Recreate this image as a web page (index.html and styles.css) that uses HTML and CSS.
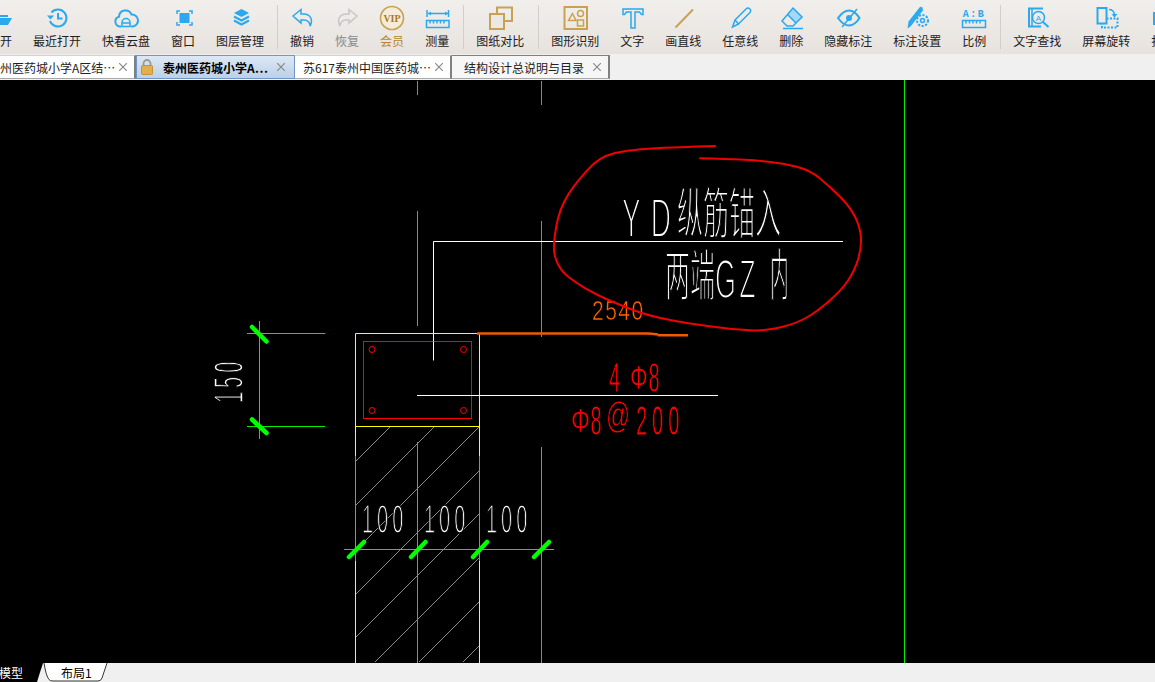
FILE: index.html
```html
<!DOCTYPE html>
<html>
<head>
  <meta charset="utf-8">
  <link rel="stylesheet" href="styles.css">
</head>
<body>
  <div class="toolbar">
    <div class="tool-group tool-group-first">
      <div class="tool">
        <svg class="tool-icon" viewBox="0 0 24 24"><path class="ic-fill" d="M1 7h8l2 2h9v2H1z"/><path class="ic-fill" d="M3 12h21l-4 7H1z"/></svg>
        <span>打开</span>
      </div>
      <div class="tool">
        <svg class="tool-icon" viewBox="0 0 24 24"><path class="ic-line" d="M6.5 6.5A8.5 8.5 0 1 1 5 15"/><path class="ic-fill" d="M2 9.500h7L5.500 13.500z"/><path class="ic-line" d="M13 7v5.500h4.500"/></svg>
        <span>最近打开</span>
      </div>
      <div class="tool">
        <svg class="tool-icon" viewBox="0 0 24 24"><path class="ic-line" d="M7 20.500H6a5 5 0 0 1-1-9.800 6.500 6.500 0 0 1 12.500-2.200 5.800 5.800 0 0 1 1 12H17"/><path class="ic-line ic-thin" d="M8 20.500v-4a4 4 0 0 1 8 0v4zM8 17h8"/></svg>
        <span>快看云盘</span>
      </div>
      <div class="tool">
        <svg class="tool-icon" viewBox="0 0 24 24"><rect class="ic-fill" x="8.500" y="7" width="10" height="10"/><path class="ic-line ic-thin" d="M6 8V5h3M18 5h3v3M21 16v3h-3M9 19H6v-3"/></svg>
        <span>窗口</span>
      </div>
      <div class="tool">
        <svg class="tool-icon" viewBox="0 0 24 24"><path class="ic-fill" d="M13.500 3l7.500 4-7.500 4-7.500-4z"/><path class="ic-line" d="M6 10.500l7.500 4 7.500-4M6 14.500l7.500 4 7.500-4"/></svg>
        <span>图层管理</span>
      </div>
    </div>
    <div class="tool-sep"></div>
    <div class="tool-group">
      <div class="tool">
        <svg class="tool-icon" viewBox="0 0 24 24"><path class="ic-line ic-thin" d="M3 10l8-6.500V8h3c4.500 0 7.500 3 7.500 7 0 2-.6 3.500-1.500 5 .2-3.500-2.500-6-6-6h-3v3z"/></svg>
        <span>撤销</span>
      </div>
      <div class="tool tool-off">
        <svg class="tool-icon" viewBox="0 0 24 24"><path class="ic-off" d="M22 10l-8-6.500V8h-3c-4.500 0-7.500 3-7.500 7 0 2 .6 3.500 1.500 5-.2-3.500 2.500-6 6-6h3v3z"/></svg>
        <span>恢复</span>
      </div>
      <div class="tool tool-vip">
        <svg class="tool-icon" viewBox="0 0 24 24"><circle class="ic-gold ic-vip-ring" cx="12" cy="12" r="11.500"/><text class="vip-text" x="12" y="15.500">VIP</text></svg>
        <span>会员</span>
      </div>
      <div class="tool">
        <svg class="tool-icon" viewBox="0 0 24 24"><path class="ic-line ic-thin" d="M2 4v7M23.500 4v7M3 7.500h20"/><path class="ic-fill" d="M3 7.500l3-2v4zM23 7.500l-3-2v4z"/><path class="ic-line ic-thin" d="M1.500 14.500h22.500v7H1.500zM5 14.500v3M8.500 14.500v3M12 14.500v3M15.500 14.500v3M19 14.500v3"/></svg>
        <span>测量</span>
      </div>
    </div>
    <div class="tool-sep"></div>
    <div class="tool-group">
      <div class="tool">
        <svg class="tool-icon" viewBox="0 0 24 24"><rect class="ic-gold" x="9" y="1.500" width="15" height="13.500"/><rect class="ic-gold ic-paper" x="2" y="8" width="14" height="15"/></svg>
        <span>图纸对比</span>
      </div>
    </div>
    <div class="tool-sep"></div>
    <div class="tool-group">
      <div class="tool">
        <svg class="tool-icon" viewBox="0 0 24 24"><rect class="ic-gold" x="1.500" y="1" width="22.500" height="22"/><path class="ic-gold ic-thin" d="M9.500 7.500l3.500 7H5.500z"/><circle class="ic-gold ic-thin" cx="17.500" cy="7.500" r="3"/><rect class="ic-gold ic-thin" x="14.500" y="14" width="6" height="6"/></svg>
        <span>图形识别</span>
      </div>
      <div class="tool">
        <svg class="tool-icon" viewBox="0 0 24 24"><path class="ic-line ic-thin" d="M3 3h20v5.500h-1.500L19.500 6H15v16h-4V6H6.500L4.500 8.500H3z"/></svg>
        <span>文字</span>
      </div>
      <div class="tool">
        <svg class="tool-icon" viewBox="0 0 24 24"><path class="ic-gold" d="M4.500 21.500L22 3.500"/></svg>
        <span>画直线</span>
      </div>
      <div class="tool">
        <svg class="tool-icon" viewBox="0 0 24 24"><path class="ic-line ic-thin" d="M7 14L18 3a2.500 2.500 0 0 1 4 3.500L10.500 18z"/><path class="ic-line ic-thin" d="M7 14l-2.500 7 6-3"/></svg>
        <span>任意线</span>
      </div>
      <div class="tool">
        <svg class="tool-icon" viewBox="0 0 24 24"><path class="ic-hatch" d="M14 2l9 9-6 6-9-9z"/><path class="ic-line ic-thin" d="M14 2l9 9-9 9H8l-5-5zM8 8l9 9M4 22.500h20"/></svg>
        <span>删除</span>
      </div>
      <div class="tool">
        <svg class="tool-icon" viewBox="0 0 24 24"><path class="ic-line" d="M2 12c4-5.500 7-7.500 11-7.500s7 2 10.500 7.500c-3.500 5.500-6.500 7.500-10.500 7.500S6 17.500 2 12z"/><circle class="ic-fill" cx="13" cy="12" r="3"/><path class="ic-line ic-thin" d="M21 3L6 21"/></svg>
        <span>隐藏标注</span>
      </div>
      <div class="tool">
        <svg class="tool-icon" viewBox="0 0 24 24"><path class="ic-fill" d="M2.500 22.500l1-7L14.500 1.500a2 2 0 0 1 3 .3l.5 2.500L6 20z"/><circle class="ic-line ic-thin" cx="17.500" cy="14.500" r="2"/><circle class="ic-line ic-gear" cx="17.500" cy="14.500" r="5.500"/></svg>
        <span>标注设置</span>
      </div>
      <div class="tool">
        <svg class="tool-icon" viewBox="0 0 24 24"><text class="ratio-text" x="12" y="10.500">A:B</text><path class="ic-line ic-thin" d="M.5 14.500h23v7H.5zM4 14.500v3M7.500 14.500v3M11 14.500v3M14.500 14.500v3M18 14.500v3"/></svg>
        <span>比例</span>
      </div>
    </div>
    <div class="tool-sep"></div>
    <div class="tool-group">
      <div class="tool">
        <svg class="tool-icon" viewBox="0 0 24 24"><path class="ic-line" d="M18 2.500H4v18h12"/><path class="ic-line ic-thin" d="M7 2.500v18"/><circle class="ic-line ic-thin" cx="13.500" cy="11.500" r="6"/><text class="lens-text" x="13.500" y="14.500">A</text><path class="ic-line" d="M17.500 15.500l6 5.500"/></svg>
        <span>文字查找</span>
      </div>
      <div class="tool">
        <svg class="tool-icon" viewBox="0 0 24 24"><rect class="ic-line" x="3.500" y="2" width="9" height="15.500"/><path class="ic-line ic-dash" d="M12.500 12.500H23.500V21.500H8V17.500"/><path class="ic-line ic-thin" d="M15 3.500c3 0 5 1.500 5.500 5"/><path class="ic-fill" d="M17.500 8h6L20.500 11.500z"/></svg>
        <span>屏幕旋转</span>
      </div>
      <div class="tool">
        <svg class="tool-icon" viewBox="0 0 24 24"><rect class="ic-fill" x="2" y="6" width="20" height="13"/></svg>
        <span>打印</span>
      </div>
    </div>
  </div>

  <div class="tabs">
    <div class="tab tab-first">
      <span>泰州医药城小学A区结…</span>
      <svg class="tab-close" viewBox="0 0 8 8"><path d="M0 0l8 8M8 0L0 8"/></svg>
    </div>
    <div class="tab tab-active">
      <svg class="tab-lock" viewBox="0 0 12 16"><path class="lock-shackle" d="M2.500 7V4.500a3.500 3.500 0 0 1 7 0V7"/><rect class="lock-body" x="0.500" y="6.500" width="11" height="9" rx="1"/></svg>
      <span>泰州医药城小学A…</span>
      <svg class="tab-close" viewBox="0 0 8 8"><path d="M0 0l8 8M8 0L0 8"/></svg>
    </div>
    <div class="tab tab-third">
      <span>苏617泰州中国医药城…</span>
      <svg class="tab-close" viewBox="0 0 8 8"><path d="M0 0l8 8M8 0L0 8"/></svg>
    </div>
    <div class="tab tab-last">
      <span>结构设计总说明与目录</span>
      <svg class="tab-close" viewBox="0 0 8 8"><path d="M0 0l8 8M8 0L0 8"/></svg>
    </div>
  </div>

  <div class="drawing">
    <svg class="cad" viewBox="0 80 1155 583">
      <!-- axis stubs -->
      <path class="cad-axis" d="M417.500 81V95M541.500 81V105M417.500 211V326M541.500 221V337M417.500 442V490M417.500 561V663M541.500 561V663"/>
      <!-- hatch -->
      <path class="cad-hatch" d="M355.500 461.500L390.500 426.500M355.500 505.500L434.500 426.500M355.500 550.500L479.500 426.500M355.500 594.500L479.500 470.500M355.500 637.500L479.500 513.500M374.500 662.500L479.500 557.500M418.500 662.500L479.500 601.500M462.500 662.500L479.500 645.500"/>
      <!-- dimension lines -->
      <path class="cad-green" d="M904.500 80V663M259.500 321V439M247 333.500H325M247 426.500H325M344 549.500H554M355.500 456V561M479.500 456V561M417.500 490V561M541.500 447V561"/>
      <path class="cad-tick" d="M252 327L266.500 341.500M252 419.500L266.500 433M349 557L364 542M411 557L425.500 542M473 557L487 542M534 557L549 542"/>
      <!-- column -->
      <path class="cad-yellow" d="M355.500 456V333.500H479.500V456M355.500 426.500H479.500M355.500 561V663M479.500 561V663"/>
      <rect class="cad-red" x="363.500" y="341.500" width="108" height="77"/>
      <circle class="cad-red" cx="372" cy="349.500" r="3"/>
      <circle class="cad-red" cx="463.500" cy="349.500" r="3"/>
      <circle class="cad-red" cx="372" cy="410.500" r="3"/>
      <circle class="cad-red" cx="463.500" cy="410.500" r="3"/>
      <!-- leaders -->
      <path class="cad-white" d="M433.500 360.500V241.500H843M417 395.500H718"/>
      <path class="cad-orange" d="M477 333.500H649L658 334.500M658 335.300H688"/>
      <!-- texts -->
      <text class="cad-text cad-latin" font-size="56" letter-spacing="20" transform="translate(622,236.500) scale(.5,1)">YD</text>
      <text class="cad-text cad-cjk" font-size="52" transform="translate(677,232.500) scale(.5,1.05)">纵筋锚入</text>
      <text class="cad-text cad-cjk" font-size="52" transform="translate(665,294.500) scale(.48,1.05)">两端</text>
      <text class="cad-text cad-latin" font-size="56" letter-spacing="7" transform="translate(715,298) scale(.48,1)">GZ</text>
      <text class="cad-text cad-cjk" font-size="52" transform="translate(770,294.500) scale(.36,1.08)">内</text>
      <text class="cad-text cad-latin" font-size="40" letter-spacing="8" transform="translate(243,403) rotate(-90) scale(.5,1.05)">150</text>
      <text class="cad-text cad-latin" font-size="40" letter-spacing="8" transform="translate(362,533) scale(.5,1.03)">100</text>
      <text class="cad-text cad-latin" font-size="40" letter-spacing="8" transform="translate(424,533) scale(.5,1.03)">100</text>
      <text class="cad-text cad-latin" font-size="40" letter-spacing="8" transform="translate(486,533) scale(.5,1.03)">100</text>
      <text class="cad-text cad-latin cad-text-orange" font-size="28" letter-spacing="2" transform="translate(592,320) scale(.75,1)">2540</text>
      <text class="cad-text cad-latin cad-text-red" font-size="40" transform="translate(609,391.500) scale(.5,1.05)">4</text>
      <text class="cad-text cad-latin cad-text-red" font-size="34" transform="translate(630,389) scale(.65,1)">Φ</text>
      <text class="cad-text cad-latin cad-text-red" font-size="40" transform="translate(648.500,391.500) scale(.5,1.05)">8</text>
      <text class="cad-text cad-latin cad-text-red" font-size="34" transform="translate(571,432) scale(.7,1)">Φ</text>
      <text class="cad-text cad-latin cad-text-red" font-size="40" transform="translate(590.500,435) scale(.5,1.05)">8</text>
      <text class="cad-text cad-latin cad-text-red" font-size="36" transform="translate(606,428) scale(.66,1.05)">@</text>
      <text class="cad-text cad-latin cad-text-red" font-size="40" letter-spacing="10" transform="translate(636,435) scale(.5,1.05)">200</text>
      <!-- cloud mark -->
      <path class="cad-cloud" d="M715 146Q673.300 147.300 660 148Q646.700 148.700 635 149.900Q623.300 151 615 153Q606.700 155 600 159.200Q593.300 163.300 586.700 170.800Q580 178.300 574.200 185.800Q568.300 193.300 564.200 201.700Q560 210 558 218.400Q556 226.700 554.900 235Q553.700 243.300 554 250Q554.300 256.700 558 264.200Q561.700 271.700 569.200 277.500Q576.700 283.300 586.700 289.200Q596.700 295 608.400 300Q620 305 631.700 309.500Q643.300 314 658.300 317.500Q673.300 321 690 323.500Q706.700 326 723.400 328Q740 330 753.400 330.400Q766.700 330.700 781.700 327Q796.700 323.300 806.700 317.500Q816.700 311.700 829.200 300.900Q841.700 290 848.400 280Q855 270 858.400 258.400Q861.700 246.700 860.900 236.700Q860 226.700 855 216.700Q850 206.700 840 196.700Q830 186.700 820 178.400Q810 170 796.700 166.700Q783.300 163.300 768.300 161.700Q753.300 160 740 159.500Q726.700 159 700 158.300"/>
    </svg>
  </div>

  <div class="sheets">
    <div class="sheet sheet-model">模型</div>
    <div class="sheet sheet-layout">
      <svg class="sheet-shape" viewBox="0 0 65 19"><path d="M1 0Q3 13 6 16.500Q7 18 10 18H55Q58 18 59 15L64 0"/></svg>
      <span>布局1</span>
    </div>
  </div>
</body>
</html>
```

FILE: styles.css
```css
html, body {
  margin: 0;
  height: 100%;
}

body {
  display: flex;
  flex-direction: column;
  width: 1155px;
  height: 682px;
  overflow: hidden;
  background: #f0f0f0;
  font-family: "Noto Sans CJK SC", "Liberation Sans", sans-serif;
  font-size: 12px;
  color: #222;
}

/* Toolbar */
.toolbar {
  display: flex;
  flex: none;
  height: 54px;
  background: linear-gradient(180deg, #f1efec 0%, #e7e2de 100%);
}

.tool-group {
  display: flex;
  gap: 21px;
  padding: 0 14px 0 12px;
}

.tool-group-first {
  margin-left: -24px;
  padding-right: 13px;
}

.tool-sep {
  flex: none;
  width: 1px;
  height: 44px;
  margin-top: 5px;
  background: #d2cec9;
}

.tool {
  display: flex;
  flex-direction: column;
  align-items: center;
  flex: none;
  padding-top: 6px;
  line-height: 16px;
  white-space: nowrap;
}

.tool-icon {
  display: block;
  width: 24px;
  height: 24px;
  margin-bottom: 3px;
  overflow: visible;
}

.tool-off { color: #8a8a8a; }
.tool-vip { color: #b8862d; }

.ic-line {
  fill: none;
  stroke: #2aa9ee;
  stroke-width: 2;
}

.ic-thin { stroke-width: 1.5; }
.ic-fill { fill: #2aa9ee; }
.ic-hatch { fill: #a5d8f5; }
.ic-gear { stroke-width: 2; stroke-dasharray: 2.200 1.400; }
.ic-dash { stroke-dasharray: 2 1.500; }

.ic-off {
  fill: none;
  stroke: #c6c6c6;
  stroke-width: 1.500;
}

.ic-gold {
  fill: none;
  stroke: #c8a252;
  stroke-width: 2;
}

.ic-gold.ic-thin { stroke-width: 1.500; }
.ic-paper { fill: #ece8e4; }
.ic-vip-ring { fill: #f4ecd8; stroke-width: 1.600; }

.vip-text {
  font-family: "Liberation Serif", serif;
  font-size: 10px;
  font-weight: 700;
  text-anchor: middle;
  fill: #a67a22;
}

.ratio-text {
  font-family: "Liberation Mono", monospace;
  font-size: 10px;
  font-weight: 700;
  letter-spacing: 1.500px;
  text-anchor: middle;
  fill: #2aa9ee;
}

.lens-text {
  font-family: "Liberation Sans", sans-serif;
  font-size: 8px;
  text-anchor: middle;
  fill: #2aa9ee;
}

/* Document tabs */
.tabs {
  display: flex;
  flex: none;
  box-sizing: border-box;
  height: 26px;
  padding-top: 1px;
  margin-left: -23px;
  background: #f0f0f0;
}

.tab {
  display: flex;
  align-items: center;
  flex: none;
  box-sizing: border-box;
  height: 24px;
  background: #fff;
  border-right: 2px solid #808080;
  border-top: 1px solid #d0d0d0;
  border-bottom: 1px solid #a8a8a8;
  white-space: nowrap;
}

.tab-first { width: 159px; padding-left: 11px; }
.tab-third { width: 157px; padding-left: 8px; }
.tab-last {
  width: 158px;
  padding-left: 12px;
  background: #f6f6f6;
  border-top-color: #808080;
}

.tab-active {
  width: 159px;
  padding-left: 4px;
  font-weight: 700;
  color: #000;
  background: linear-gradient(180deg, #dde8f5 0%, #bcd0e8 100%);
  border: 1px solid #6f96c4;
}

.tab-lock {
  flex: none;
  width: 12px;
  height: 16px;
  margin-right: 10px;
}

.lock-shackle {
  fill: none;
  stroke: #9c9a8c;
  stroke-width: 1.800;
}

.lock-body { fill: #e0b04e; stroke: #c39334; }

.tab-close {
  flex: none;
  width: 8px;
  height: 8px;
  margin-left: auto;
  margin-right: 7px;
}

.tab-active .tab-close { margin-right: 9px; }

.tab-close path {
  fill: none;
  stroke: #8a8a8a;
  stroke-width: 1.200;
}

/* Drawing area */
.drawing {
  flex: 1;
  min-height: 0;
  background: #000;
}

.cad {
  display: block;
  width: 100%;
  height: 100%;
  will-change: transform;
}

.cad-axis { fill: none; stroke: #5f9f80; stroke-width: 1; }
.cad-hatch { fill: none; stroke: #8c8c8c; stroke-width: 1; shape-rendering: crispEdges; }
.cad-green { fill: none; stroke: #00f000; stroke-width: 1; }
.cad-tick { fill: none; stroke: #00ff00; stroke-width: 4.500; stroke-linecap: round; }
.cad-yellow { fill: none; stroke: #ffff00; stroke-width: 1; }
.cad-red { fill: none; stroke: #ff0000; stroke-width: 1; }
.cad-white { fill: none; stroke: #fff; stroke-width: 1; }
.cad-orange { fill: none; stroke: #f05a00; stroke-width: 2.500; }

.cad-cloud {
  fill: none;
  stroke: #f00000;
  stroke-width: 2;
  stroke-linejoin: round;
  stroke-linecap: round;
}

/* black stroke over the fill thins the glyphs down to CAD line weight */
.cad-text {
  fill: #fff;
  stroke: #000;
}

.cad-latin {
  font-family: "Liberation Sans", sans-serif;
  stroke-width: .04em;
}

.cad-cjk {
  font-family: "Noto Sans CJK SC", sans-serif;
  stroke-width: .035em;
}

.cad-latin.cad-text-orange {
  fill: #ff6400;
  stroke-width: .02em;
}

.cad-latin.cad-text-red {
  fill: #ff0000;
  stroke-width: .02em;
}

/* Sheet tabs */
.sheets {
  display: flex;
  flex: none;
  height: 19px;
  background: #f0f0f0;
  line-height: 19px;
}

.sheet {
  flex: none;
  height: 19px;
}

.sheet-model {
  box-sizing: border-box;
  width: 43px;
  text-indent: -1px;
  color: #fff;
  background: #000;
  clip-path: polygon(0 0, 100% 0, 86% 100%, 0 100%);
}

.sheet-layout {
  position: relative;
  box-sizing: border-box;
  width: 65px;
  padding-left: 18px;
  color: #000;
}

.sheet-layout span {
  position: relative;
}

.sheet-shape {
  position: absolute;
  inset: 0;
  width: 65px;
  height: 19px;
}

.sheet-shape path {
  fill: #fff;
  stroke: #333;
  stroke-width: 1;
}
```
